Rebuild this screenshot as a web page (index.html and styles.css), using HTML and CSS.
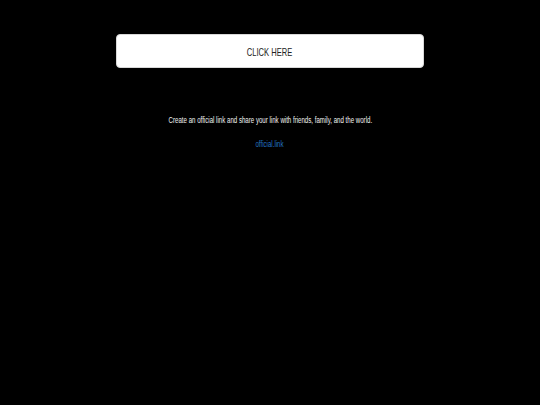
FILE: index.html
```html
<!DOCTYPE html>
<html>
<head>
<meta charset="utf-8">
<link rel="stylesheet" href="styles.css">
</head>
<body>
<main class="page">
  <a class="cta" href="#"><span class="narrow">CLICK HERE</span></a>
  <p class="desc"><span class="narrow">Create an official link and share your link with friends, family, and the world.</span></p>
  <a class="brand" href="#"><span class="narrow">official.link</span></a>
</main>
</body>
</html>
```

FILE: styles.css
```css
html, body {
  margin: 0;
  padding: 0;
  background: #000;
  height: 100%;
}
body {
  font-family: "Liberation Sans", Arial, sans-serif;
}
.page {
  display: flex;
  flex-direction: column;
  align-items: center;
  padding-top: 34px;
}
.narrow {
  display: inline-block;
  white-space: nowrap;
  transform: scaleX(0.72);
  transform-origin: center;
}
.cta {
  display: flex;
  align-items: center;
  justify-content: center;
  width: 308px;
  height: 34px;
  box-sizing: border-box;
  padding-top: 1px;
  background: #fff;
  border: 1px solid #d8d8d8;
  border-radius: 4px;
  color: #222;
  font-size: 10.5px;
  text-decoration: none;
}
.desc {
  margin: 46px 0 0;
  color: #f2f2f2;
  font-size: 8.5px;
  line-height: 12px;
}
.brand {
  margin-top: 12px;
  color: #2475c4;
  font-size: 8.5px;
  line-height: 12px;
  text-decoration: none;
}
```
